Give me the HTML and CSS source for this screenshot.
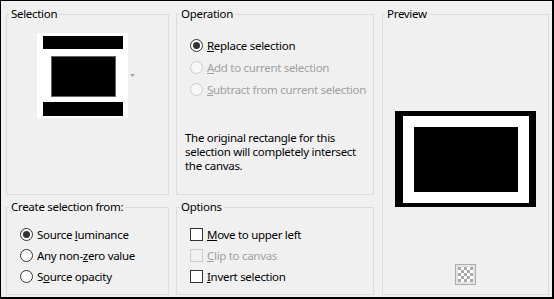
FILE: index.html
```html
<!DOCTYPE html>
<html lang="en">
<head>
  <meta charset="UTF-8" />
  <title>Create Selection</title>
  <link rel="stylesheet" href="styles.css">
</head>
<body>
  <div class="dialog">

    <fieldset class="group sel-group">
      <legend>Selection</legend>
      <div class="thumb">
        <svg width="100" height="85" viewBox="0 0 100 85">
          <rect x="0" y="0" width="91" height="85" fill="#fff"/>
          <rect x="6" y="3" width="80" height="13" fill="#000"/>
          <rect x="14.5" y="23.5" width="64" height="40" fill="#000" stroke="#666" stroke-width="1"/>
          <rect x="6" y="69" width="80" height="14" fill="#000"/>
          <path d="M93 41 L98 41 L95.5 44 Z" fill="#a8a8a8"/>
        </svg>
      </div>
    </fieldset>

    <fieldset class="group op-group">
      <legend>Operation</legend>
      <div class="choices">
        <div class="row"><span class="radio on"></span><span><u>R</u>eplace selection</span></div>
        <div class="row off"><span class="radio"></span><span><u>A</u>dd to current selection</span></div>
        <div class="row off"><span class="radio"></span><span><u>S</u>ubtract from current selection</span></div>
      </div>
      <p class="note">The original rectangle for this<br>selection will completely intersect<br>the canvas.</p>
    </fieldset>

    <fieldset class="group preview-group">
      <legend>Preview</legend>
      <div class="preview">
        <svg width="141" height="96" viewBox="0 0 141 96">
          <rect x="0" y="0" width="141" height="96" fill="#000"/>
          <rect x="8" y="5" width="126" height="87" fill="#fff"/>
          <rect x="19" y="16" width="104" height="65" fill="#000"/>
        </svg>
      </div>
      <div class="checker">
        <svg width="21" height="21" viewBox="0 0 21 21">
          <defs>
            <pattern id="chk" x="3" y="3" width="6" height="6" patternUnits="userSpaceOnUse">
              <rect width="6" height="6" fill="#fff"/>
              <rect width="3" height="3" fill="#a9a9a9"/>
              <rect x="3" y="3" width="3" height="3" fill="#a9a9a9"/>
            </pattern>
          </defs>
          <rect x="0.5" y="0.5" width="20" height="20" fill="#e3e3e3" stroke="#adadad"/>
          <rect x="3" y="3" width="15" height="15" fill="url(#chk)"/>
        </svg>
      </div>
    </fieldset>

    <fieldset class="group from-group">
      <legend>Create selection from:</legend>
      <div class="choices tight">
        <div class="row"><span class="radio on"></span><span>Source <u>l</u>uminance</span></div>
        <div class="row"><span class="radio"></span><span>Any non-<u>z</u>ero value</span></div>
        <div class="row"><span class="radio"></span><span>S<u>o</u>urce opacity</span></div>
      </div>
    </fieldset>

    <fieldset class="group opt-group">
      <legend>Options</legend>
      <div class="choices tight">
        <div class="row"><span class="check"></span><span><u>M</u>ove to upper left</span></div>
        <div class="row off"><span class="check"></span><span><u>C</u>lip to canvas</span></div>
        <div class="row"><span class="check"></span><span><u>I</u>nvert selection</span></div>
      </div>
    </fieldset>

  </div>
</body>
</html>
```

FILE: styles.css
```css
body {
  margin: 0;
  background: #f0f0f0;
  font-family: 'Noto Sans', 'Liberation Sans', sans-serif;
  font-size: 11.5px;
  letter-spacing: -0.3px;
  color: #000;
}

.dialog {
  box-sizing: border-box;
  width: 554px;
  height: 299px;
  border-style: solid;
  border-color: #000;
  border-width: 1px 2px 2px 1px;
  background: #f0f0f0;
  display: grid;
  grid-template-columns: 163px 198px 168px;
  grid-template-rows: 189px 96px;
  column-gap: 7px;
  row-gap: 4px;
  padding: 5px 0 0 5px;
}

.group {
  margin: 0;
  padding: 0;
  min-width: 0;
  border: 1px solid #dcdcdc;
}

.group legend {
  margin-left: 2px;
  padding: 0 2px;
  line-height: 16px;
}

.preview-group {
  grid-column: 3;
  grid-row: 1 / span 2;
  margin-left: 1px;
  display: flex;
  flex-direction: column;
  align-items: center;
}

.from-group { grid-column: 1; grid-row: 2; }
.opt-group { grid-column: 2; grid-row: 2; }

/* selection thumbnail */
.thumb {
  margin: 11px 0 0 30px;
  height: 85px;
}
.thumb svg { display: block; }

/* radios and checkboxes */
.choices {
  padding: 12px 0 0 13px;
}
.choices.tight {
  padding-top: 9px;
}

.row {
  display: flex;
  align-items: center;
  gap: 4px;
  height: 22px;
  white-space: nowrap;
}
.tight .row {
  height: 21px;
}
.row.off {
  color: #a0a0a0;
}

.radio {
  box-sizing: border-box;
  width: 13px;
  height: 13px;
  border: 1px solid #333;
  border-radius: 50%;
  background: #fff;
  position: relative;
  flex: none;
}
.radio.on::after {
  content: "";
  position: absolute;
  left: 2px;
  top: 2px;
  width: 7px;
  height: 7px;
  border-radius: 50%;
  background: #333;
}
.row.off .radio {
  border-color: #cccccc;
  background: #f7f7f7;
}

.check {
  box-sizing: border-box;
  width: 13px;
  height: 13px;
  border: 1px solid #333;
  background: #fff;
  flex: none;
}
.row.off .check {
  border-color: #cccccc;
  background: #f0f0f0;
}

.note {
  margin: 31px 0 0 8px;
  line-height: 14px;
  white-space: nowrap;
}

/* preview */
.preview {
  margin-top: 89px;
  height: 96px;
}
.preview svg, .checker svg { display: block; }

.checker {
  margin-top: 57px;
}
```
